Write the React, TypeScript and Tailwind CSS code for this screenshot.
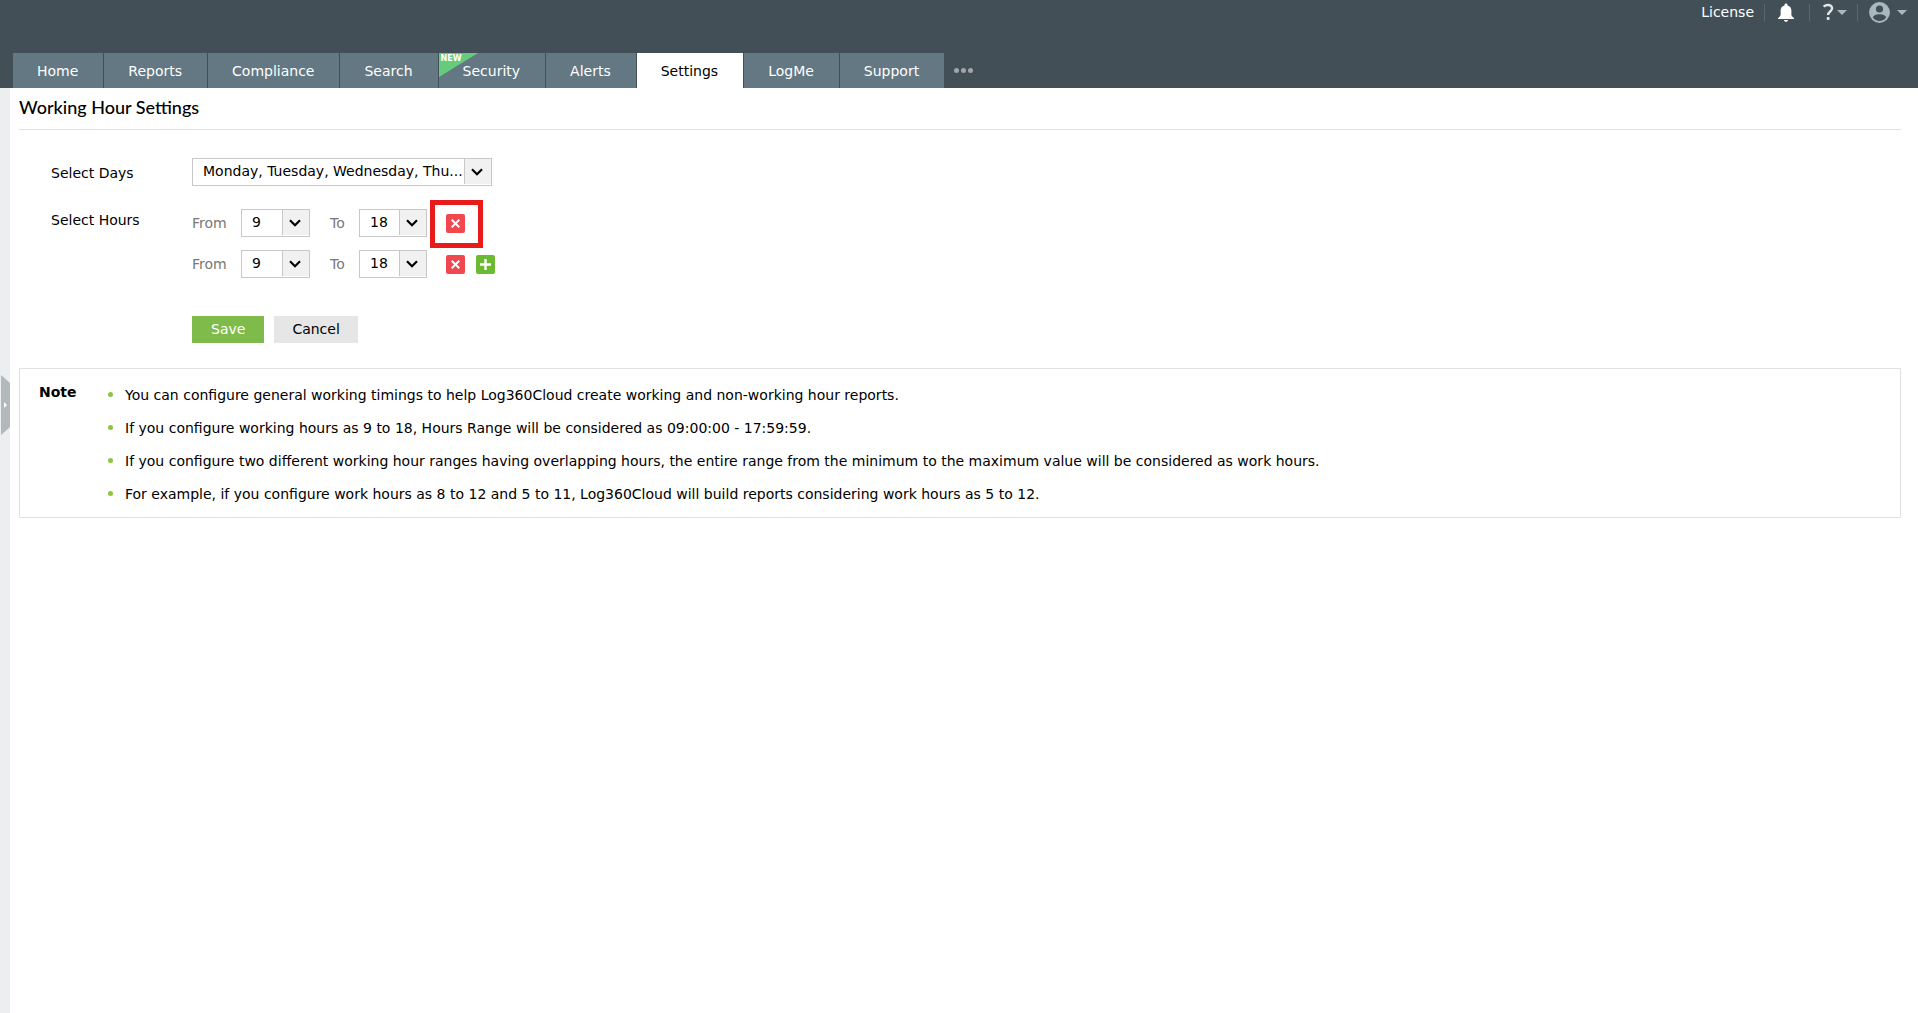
import React, { useState } from "react";

const tabs = [
  { label: "Home" },
  { label: "Reports" },
  { label: "Compliance" },
  { label: "Search" },
  { label: "Security", isNew: true },
  { label: "Alerts" },
  { label: "Settings" },
  { label: "LogMe" },
  { label: "Support" },
];

const notes = [
  "You can configure general working timings to help Log360Cloud create working and non-working hour reports.",
  "If you configure working hours as 9 to 18, Hours Range will be considered as 09:00:00 - 17:59:59.",
  "If you configure two different working hour ranges having overlapping hours, the entire range from the minimum to the maximum value will be considered as work hours.",
  "For example, if you configure work hours as 8 to 12 and 5 to 11, Log360Cloud will build reports considering work hours as 5 to 12.",
];

const hours = Array.from({ length: 24 }, (_, i) => String(i + 1));

const Caret = () => (
  <svg width="10" height="5" viewBox="0 0 10 5" fill="#a9b8bf">
    <path d="M0 0h10L5 5z" />
  </svg>
);

const Separator = () => <span className="h-[17px] w-px bg-[#5b676e]" />;

const TopBar = () => (
  <div className="flex h-[53px] items-start justify-end pr-[11px]">
    <div className="flex h-6 items-center text-white">
      <a href="#license" className="mr-[10px]">
        License
      </a>
      <Separator />
      <button type="button" aria-label="Notifications" className="mr-[14px] ml-3">
        <svg width="18" height="19" viewBox="0 0 18 19" fill="#fff">
          <path d="M9 0.500c-0.900 0-1.500 0.600-1.500 1.400v0.500C5 3 3.600 5 3.600 7.600v4.200c0 1.300-1.300 2-2.600 3.400V16h16v-0.800c-1.300-1.400-2.600-2.100-2.600-3.400V7.600C14.400 5 13 3 10.500 2.400V1.900C10.500 1.100 9.900 0.500 9 0.500z" />
          <path d="M7 17h4c0 1.100-0.900 1.800-2 1.800S7 18.100 7 17z" />
        </svg>
      </button>
      <Separator />
      <button type="button" aria-label="Help" className="mr-[10px] ml-3 flex items-center gap-[2px]">
        <svg width="13" height="18" viewBox="0 0 13 18" fill="none">
          <path
            d="M1.600 3.600C2.900 2.500 4.300 2 6 2c2.500 0 4.100 1.200 4.100 3.300 0 3.100-4 3.300-4 6.700"
            stroke="#dfe5e8"
            strokeWidth="2.400"
          />
          <rect x="4.700" y="14.100" width="2.900" height="2.900" rx="1" fill="#dfe5e8" />
        </svg>
        <Caret />
      </button>
      <Separator />
      <button type="button" aria-label="Account" className="ml-[11px] flex items-center gap-[7px]">
        <svg width="21" height="21" viewBox="0 0 21 21">
          <circle cx="10.500" cy="10.500" r="10.400" fill="#a9b8bf" />
          <circle cx="10.500" cy="7" r="3.600" fill="#434f56" />
          <path
            d="M10.500 12.300c-3.600 0-6.600 1.500-6.600 3.300 1.300 2.200 3.900 3.500 6.600 3.500s5.300-1.300 6.600-3.500c0-1.800-3-3.300-6.600-3.300z"
            fill="#434f56"
          />
        </svg>
        <Caret />
      </button>
    </div>
  </div>
);

const TabBar = ({ active, onSelect }: any) => (
  <nav className="flex h-[35px] pl-[13px]">
    {tabs.map((tab) => (
      <button
        key={tab.label}
        type="button"
        onClick={() => onSelect(tab.label)}
        className={`relative mr-px pr-[25px] pl-6 ${
          active === tab.label ? "bg-white text-black" : "bg-[#637883] text-white"
        }`}
      >
        {tab.isNew && (
          <span className="absolute top-0 left-0">
            <svg width="39" height="24" viewBox="0 0 39 24" className="block">
              <path d="M0 0h39L0 24z" fill="#66cc7c" />
            </svg>
            <span className="absolute top-px left-[2px] text-[8px] leading-[10px] font-bold text-white">
              NEW
            </span>
          </span>
        )}
        <span className="relative">{tab.label}</span>
      </button>
    ))}
    <button type="button" aria-label="More" className="ml-[9px] flex items-center gap-[2px]">
      <span className="size-[5px] rounded-full bg-[#a1a7ab]" />
      <span className="size-[5px] rounded-full bg-[#a1a7ab]" />
      <span className="size-[5px] rounded-full bg-[#a1a7ab]" />
    </button>
  </nav>
);

const SelectBox = ({ options, value, onChange, label, id, className }: any) => (
  <div className={`relative h-7 border border-[#c8c8c8] bg-white ${className}`}>
    <select
      id={id}
      aria-label={label}
      value={value}
      onChange={(e) => onChange(e.target.value)}
      className="block h-6 w-full appearance-none bg-transparent pl-[10px] text-black outline-none"
    >
      {options.map((option: string) => (
        <option key={option}>{option}</option>
      ))}
    </select>
    <span className="pointer-events-none absolute top-0 right-0 bottom-px flex w-[27px] items-center justify-center border-l border-[#c8c8c8] bg-[#f1f1f1] pr-[2px]">
      <svg width="12" height="8" viewBox="0 0 12 8" fill="none" stroke="#000" strokeWidth="2.200">
        <path d="M1 1.200l5 5 5-5" />
      </svg>
    </span>
  </div>
);

const HourRow = ({ row, onChange, onRemove, onAdd, highlighted }: any) => (
  <div className="flex h-7 items-center text-[#777]">
    <span className="w-[49px]">From</span>
    <SelectBox
      label="From hour"
      options={hours}
      value={row.from}
      onChange={(from: string) => onChange({ ...row, from })}
      className="w-[69px]"
    />
    <span className="ml-5 w-[29px]">To</span>
    <SelectBox
      label="To hour"
      options={hours}
      value={row.to}
      onChange={(to: string) => onChange({ ...row, to })}
      className="w-[68px]"
    />
    <div className="relative ml-[19px] flex gap-[11px]">
      {highlighted && (
        <span className="pointer-events-none absolute -top-[14px] -left-4 h-12 w-[53px] border-[5px] border-[#e81a1a]" />
      )}
      <button
        type="button"
        aria-label="Remove range"
        onClick={onRemove}
        className="flex size-[19px] items-center justify-center rounded-[2px] bg-[#f0484e]"
      >
        <svg width="9" height="9" viewBox="0 0 9 9" stroke="#fff" strokeWidth="2">
          <path d="M0.700 0.700l7.600 7.600M8.300 0.700l-7.600 7.600" />
        </svg>
      </button>
      {onAdd && (
        <button
          type="button"
          aria-label="Add range"
          onClick={onAdd}
          className="flex size-[19px] items-center justify-center rounded-[2px] bg-[#6cb933]"
        >
          <svg width="11" height="11" viewBox="0 0 11 11" stroke="#fff" strokeWidth="2.400">
            <path d="M5.500 0v11M0 5.500h11" />
          </svg>
        </button>
      )}
    </div>
  </div>
);

const NoteBox = () => (
  <section className="mt-[25px] flex min-h-[150px] border border-[#e1e1e1] pt-[9px] pl-[19px]">
    <h2 className="w-[69px] pt-1 text-sm font-bold">Note</h2>
    <ul>
      {notes.map((note) => (
        <li key={note} className="flex h-[33px] items-center gap-3">
          <span className="size-[5px] rounded-full bg-[#8cc63f]" />
          {note}
        </li>
      ))}
    </ul>
  </section>
);

const App = () => {
  const [active, setActive] = useState("Settings");
  const [days, setDays] = useState("Monday, Tuesday, Wednesday, Thu...");
  const [rows, setRows] = useState([
    { id: 1, from: "9", to: "18" },
    { id: 2, from: "9", to: "18" },
  ]);

  const updateRow = (next: any) => setRows(rows.map((row) => (row.id === next.id ? next : row)));
  const removeRow = (id: number) => setRows(rows.filter((row) => row.id !== id));
  const addRow = () => setRows([...rows, { id: Date.now(), from: "9", to: "18" }]);

  return (
    <div className="flex min-h-screen flex-col bg-white font-['Verdana','DejaVu_Sans',sans-serif] text-sm text-black">
      <header className="bg-[#434f56]">
        <TopBar />
        <TabBar active={active} onSelect={setActive} />
      </header>
      <div className="flex grow">
        <aside className="w-[10px] shrink-0 bg-[#ebefef] pt-[287px] pl-px">
          <button type="button" aria-label="Expand sidebar" className="block">
            <svg width="9" height="60" viewBox="0 0 9 60">
              <path d="M0 0l9 8v44l-9 8z" fill="#b3b9ba" />
              <path d="M3 27l3 3-3 3z" fill="#fff" />
            </svg>
          </button>
        </aside>
        <main className="grow pr-[17px] pl-[9px]">
          <h1 className="h-[42px] border-b border-[#e1e1e1] pt-[7px] font-['Lato',sans-serif] text-lg leading-6 font-medium">
            Working Hour Settings
          </h1>
          <form onSubmit={(e) => e.preventDefault()} className="pt-7 pl-8">
            <div className="flex items-center">
              <label htmlFor="days" className="w-[141px] pt-[2px]">
                Select Days
              </label>
              <SelectBox
                id="days"
                options={["Monday, Tuesday, Wednesday, Thu..."]}
                value={days}
                onChange={setDays}
                className="w-[300px]"
              />
            </div>
            <div className="mt-[23px] flex">
              <span className="w-[141px] pt-px">Select Hours</span>
              <div className="flex flex-col gap-[13px]">
                {rows.map((row, index) => (
                  <HourRow
                    key={row.id}
                    row={row}
                    onChange={updateRow}
                    onRemove={() => removeRow(row.id)}
                    onAdd={index === rows.length - 1 ? addRow : undefined}
                    highlighted={index === 0}
                  />
                ))}
              </div>
            </div>
            <div className="mt-[38px] flex gap-[10px] pl-[141px]">
              <button type="submit" className="h-[27px] bg-[#7fbb4b] px-[19px] pb-px text-white">
                Save
              </button>
              <button type="button" className="h-[27px] bg-[#e6e6e6] px-[18px] pb-px">
                Cancel
              </button>
            </div>
          </form>
          <NoteBox />
        </main>
      </div>
    </div>
  );
};

export default App;
